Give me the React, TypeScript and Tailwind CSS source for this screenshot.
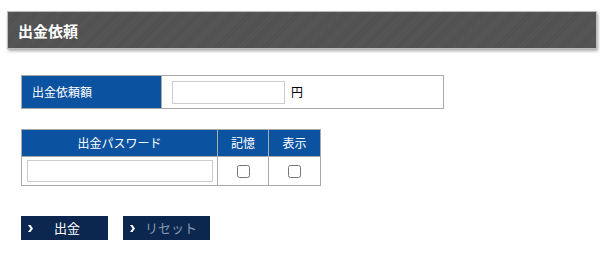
import { useState } from "react";

const jp = "font-['Noto_Sans_CJK_JP','Noto_Sans',sans-serif]";

function Arrow() {
  return (
    <svg width="5" height="7" viewBox="0 0 5 7" className="shrink-0">
      <path d="M0 0h2.5l2.5 3.5-2.5 3.5H0l2.5-3.5z" fill="#ffffff" />
    </svg>
  );
}

export default function App() {
  const [remember, setRemember] = useState(false);
  const [show, setShow] = useState(false);

  return (
    <div className={`w-[600px] h-[267px] bg-white pt-[11px] ${jp}`}>
      <div className="ml-[7px] mr-[3px] h-[38px] border border-[#bdbdbd] bg-[#535353] bg-[repeating-linear-gradient(135deg,#575757_0px,#575757_1px,#4f4f4f_1px,#4f4f4f_2px)] shadow-[1px_2px_3px_rgba(0,0,0,0.35)] flex items-center pl-[10px]">
        <h1 className="text-[15px] font-bold text-white leading-none">出金依頼</h1>
      </div>

      <div className="mt-[26px] ml-[21px] w-[423px] h-[34px] border border-[#aaaaaa] flex">
        <div className="w-[140px] bg-[#0b52a1] border-r border-[#aaaaaa] flex items-center pl-[10px] text-[12px] text-white">
          出金依頼額
        </div>
        <div className="flex items-center pl-[10px] gap-[6px]">
          <input type="text" className="w-[113px] h-[23px] border border-[#cccccc] outline-none px-1 text-[12px]" />
          <span className="text-[12px] text-black">円</span>
        </div>
      </div>

      <div className="mt-[20px] ml-[21px] w-[300px] border border-[#aaaaaa]">
        <div className="grid grid-cols-[196px_51px_1fr] h-[27px] bg-[#0b52a1] text-white text-[12px] border-b border-[#aaaaaa]">
          <div className="flex items-center justify-center border-r border-[#aaaaaa]">出金パスワード</div>
          <div className="flex items-center justify-center border-r border-[#aaaaaa]">記憶</div>
          <div className="flex items-center justify-center">表示</div>
        </div>
        <div className="grid grid-cols-[196px_51px_1fr] h-[28px]">
          <div className="flex items-center pl-[5px] border-r border-[#aaaaaa]">
            <input type={show ? "text" : "password"} className="w-[186px] h-[22px] border border-[#cccccc] outline-none px-1 text-[12px]" />
          </div>
          <div className="flex items-center justify-center border-r border-[#aaaaaa]">
            <input type="checkbox" checked={remember} onChange={() => setRemember(!remember)} className="w-[13px] h-[13px]" />
          </div>
          <div className="flex items-center justify-center">
            <input type="checkbox" checked={show} onChange={() => setShow(!show)} className="w-[13px] h-[13px]" />
          </div>
        </div>
      </div>

      <div className="mt-[30px] ml-[21px] flex gap-[15px]">
        <button type="button" className="w-[87px] h-[24px] bg-[#0b2750] flex items-center pl-[7px] text-[13px] text-white">
          <Arrow />
          <span className="ml-[21px]">出金</span>
        </button>
        <button type="button" className="w-[87px] h-[24px] bg-[#0b2750] flex items-center pl-[7px] text-[13px] text-[#8797ab]">
          <Arrow />
          <span className="ml-[10px]">リセット</span>
        </button>
      </div>
    </div>
  );
}
